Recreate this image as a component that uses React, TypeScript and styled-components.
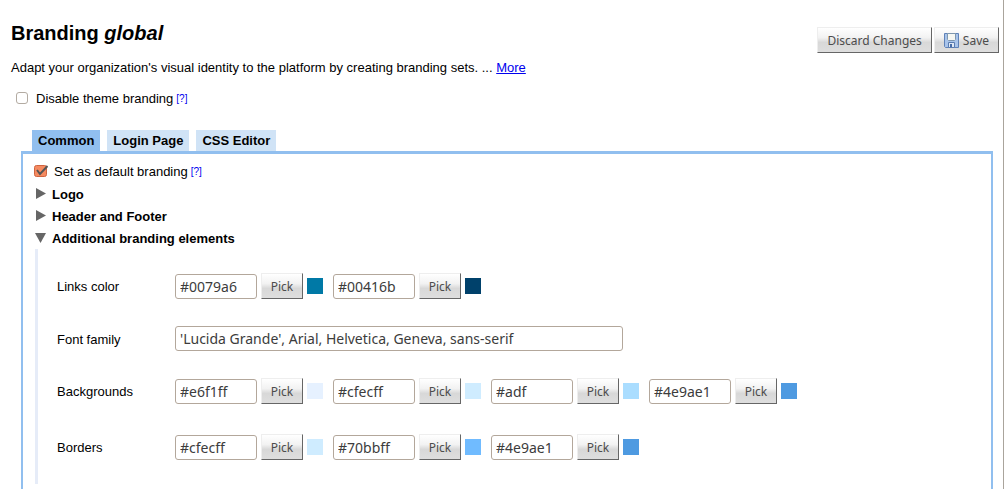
import React from 'react';
import styled, { createGlobalStyle, css } from 'styled-components';

const GlobalStyle = createGlobalStyle`
  * { box-sizing: border-box; }
  body {
    margin: 0;
    background: #fff;
    color: #000;
    font: 13px/16px "Liberation Sans", Arial, sans-serif;
  }
`;

const controlFont = '"Noto Sans", "Open Sans", sans-serif';

const Page = styled.main`
  display: flex;
  flex-direction: column;
  min-height: 100vh;
  padding: 21px 10px 0 11px;
  border-right: 1px solid #aaa49c;
`;

const Header = styled.header`
  display: flex;
  justify-content: space-between;
  align-items: flex-start;
  margin-right: -6px;
`;

const Title = styled.h1`
  margin: 0;
  font-size: 20px;
  line-height: 24px;
`;

const Actions = styled.div`
  display: flex;
  gap: 2px;
  padding-top: 6px;
`;

const Button = styled.button`
  display: flex;
  align-items: center;
  justify-content: center;
  gap: 3px;
  height: 26px;
  padding: 2px 9px 0;
  border: 1px solid;
  border-color: #eee #666 #666 #eee;
  border-radius: 0;
  background: linear-gradient(#fff, #f2f2f2 40%, #d8d8d8 60%, #dedede);
  color: #4c4c4c;
  font: 12px/18px ${controlFont};
  white-space: nowrap;
`;

const PickButton = styled(Button)`
  width: 42px;
  padding: 2px 0 0;
`;

const Intro = styled.p`
  margin: 7px 0 0;
`;

const Link = styled.a`
  color: #00e;
`;

const Help = styled.a`
  margin-left: 3px;
  color: #00e;
  font-size: 10px;
  text-decoration: none;
`;

const CheckRow = styled.div`
  display: flex;
  align-items: center;
  height: 16px;
`;

const DisableRow = styled(CheckRow)`
  margin: 15px 0 0 5px;
`;

const CheckBox = styled.input`
  appearance: none;
  width: 12px;
  height: 12px;
  margin: 0 8px 2px 0;
  border: 1px solid #b3aba2;
  border-radius: 3px;
  background: #fff;

  &:checked {
    width: 14px;
    height: 14px;
    margin-right: 6px;
    border: 0;
    border-radius: 0;
    background: url("data:image/svg+xml,%3Csvg xmlns='http://www.w3.org/2000/svg' viewBox='0 0 14 14'%3E%3Crect x='.5' y='1.5' width='12' height='11' rx='2' fill='%23f58a60' stroke='%23cf6440'/%3E%3Cpath d='M3 6l3 4L13.500 2' fill='none' stroke='%23555' stroke-width='2'/%3E%3C/svg%3E");
  }
`;

const Tabs = styled.div`
  display: flex;
  gap: 7px;
  margin: 23px 0 0 21px;
`;

const Tab = styled.button`
  height: 21px;
  padding: 0 6px;
  border: 0;
  background: ${(p) => (p['aria-selected'] ? '#91bfef' : '#d0e3f6')};
  color: #000;
  font: bold 13px/21px "Liberation Sans", Arial, sans-serif;
`;

const Panel = styled.section`
  flex: 1;
  margin-left: 10px;
  padding: 10px 11px 4px;
  border: solid #91bfef;
  border-width: 3px 2px 0;
`;

const Toggle = styled.button`
  display: flex;
  align-items: center;
  gap: 6px;
  height: 22px;
  padding: 2px 0 0 1px;
  border: 0;
  background: none;
  color: #000;
  font: bold 13px/16px "Liberation Sans", Arial, sans-serif;
`;

const Arrow = styled.svg`
  width: 11px;
  height: 11px;
  margin-bottom: 3px;
  fill: #666;
`;

const Sections = styled.div`
  padding-top: 3px;
`;

const SectionBody = styled.div`
  margin-left: 1px;
  padding: 9px 0 9px 19px;
  border-left: 3px solid #e6ecf8;
`;

const Row = styled.div`
  display: grid;
  grid-template-columns: 118px 1fr;
  align-items: center;
  padding: 12px 0;
`;

const FieldLabel = styled.label`
  padding-top: 2px;
`;

const Pickers = styled.div`
  display: flex;
  gap: 10px;
  padding: 3px 0;
`;

const Picker = styled.div`
  display: flex;
  align-items: center;
`;

const field = css`
  height: 25px;
  padding: 0 4px;
  border: 1px solid #b3a79b;
  border-radius: 3px;
  background: #fff;
  color: #3c3c3c;
  font: 14px/20px ${controlFont};
`;

const ColorInput = styled.input`
  ${field}
  width: 82px;
  margin-right: 4px;
`;

const FontInput = styled.input`
  ${field}
  width: 448px;
`;

const Swatch = styled.span<{ $color: string }>`
  width: 16px;
  height: 16px;
  margin-left: 4px;
  background: ${(p) => p.$color};
`;

const SaveIcon = () => (
  <svg width="16" height="16" viewBox="0 0 16 16" aria-hidden="true">
    <path d="M.5.5h14v14h-13l-1-1z" fill="#a9c4ea" stroke="#5f82b8" />
    <path d="M3.5.5h8v6l-1 1h-6l-1-1z" fill="#f6f7f2" stroke="#7f97ae" />
    <path d="M4.5 9.5h6v5h-6z" fill="#dfe8f4" stroke="#5a7cb0" />
    <path d="M6 11h2v3H6z" fill="#476da8" />
  </svg>
);

const Section = ({ title, open }: { title: string; open?: boolean }) => (
  <Toggle type="button" aria-expanded={!!open}>
    <Arrow viewBox="0 0 11 11" aria-hidden="true">
      <path d={open ? 'M0 1h11L5.5 11z' : 'M1 0v11l10-5.5z'} />
    </Arrow>
    {title}
  </Toggle>
);

const ColorRow = ({ label, colors }: { label: string; colors: string[] }) => {
  const id = label.toLowerCase().replace(' ', '-');
  return (
    <Row>
      <FieldLabel htmlFor={`${id}-0`}>{label}</FieldLabel>
      <Pickers>
        {colors.map((color, i) => (
          <Picker key={color}>
            <ColorInput id={`${id}-${i}`} aria-label={i ? `${label} ${i + 1}` : undefined} defaultValue={color} />
            <PickButton type="button">Pick</PickButton>
            <Swatch $color={color} />
          </Picker>
        ))}
      </Pickers>
    </Row>
  );
};

export default function App() {
  return (
    <Page>
      <GlobalStyle />
      <Header>
        <Title>Branding <em>global</em></Title>
        <Actions>
          <Button type="button">Discard Changes</Button>
          <Button type="button"><SaveIcon />Save</Button>
        </Actions>
      </Header>
      <Intro>
        Adapt your organization's visual identity to the platform by creating branding sets. ... <Link href="#more">More</Link>
      </Intro>
      <DisableRow>
        <CheckBox type="checkbox" id="disable" />
        <label htmlFor="disable">Disable theme branding</label>
        <Help href="#help">[?]</Help>
      </DisableRow>
      <Tabs role="tablist">
        <Tab type="button" role="tab" aria-selected>Common</Tab>
        <Tab type="button" role="tab" aria-selected={false}>Login Page</Tab>
        <Tab type="button" role="tab" aria-selected={false}>CSS Editor</Tab>
      </Tabs>
      <Panel>
        <CheckRow>
          <CheckBox type="checkbox" id="default" defaultChecked />
          <label htmlFor="default">Set as default branding</label>
          <Help href="#help">[?]</Help>
        </CheckRow>
        <Sections>
          <Section title="Logo" />
          <Section title="Header and Footer" />
          <Section title="Additional branding elements" open />
          <SectionBody>
            <ColorRow label="Links color" colors={['#0079a6', '#00416b']} />
            <Row>
              <FieldLabel htmlFor="font">Font family</FieldLabel>
              <FontInput id="font" defaultValue="'Lucida Grande', Arial, Helvetica, Geneva, sans-serif" />
            </Row>
            <ColorRow label="Backgrounds" colors={['#e6f1ff', '#cfecff', '#adf', '#4e9ae1']} />
            <ColorRow label="Borders" colors={['#cfecff', '#70bbff', '#4e9ae1']} />
          </SectionBody>
        </Sections>
      </Panel>
    </Page>
  );
}
